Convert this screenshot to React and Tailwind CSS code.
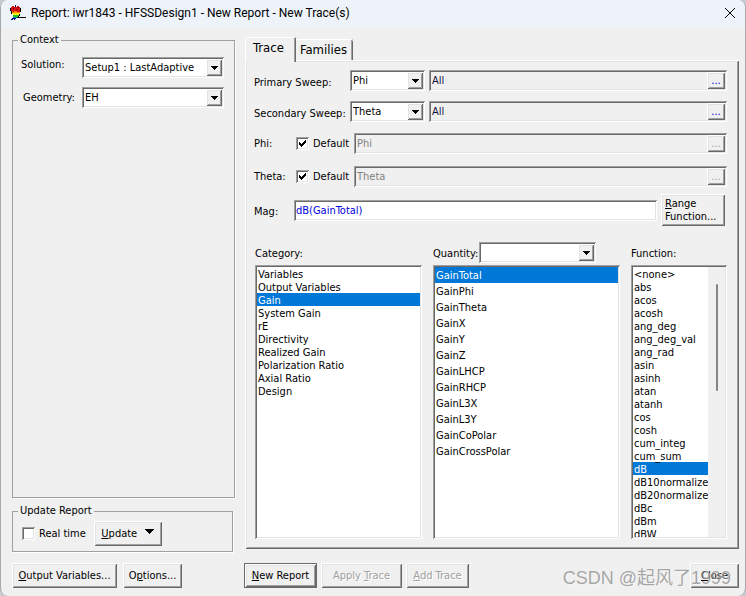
import React, { useState } from "react";
import clsx from "clsx";

const RAISED =
  "bg-[#f0f0f0] shadow-[inset_1px_1px_#ffffff,inset_-1px_-1px_#696969,inset_2px_2px_#e3e3e3,inset_-2px_-2px_#a0a0a0]";
const SUNKEN =
  "shadow-[inset_1px_1px_#a0a0a0,inset_-1px_-1px_#ffffff,inset_2px_2px_#696969,inset_-2px_-2px_#e3e3e3]";

const categories = [
  "Variables",
  "Output Variables",
  "Gain",
  "System Gain",
  "rE",
  "Directivity",
  "Realized Gain",
  "Polarization Ratio",
  "Axial Ratio",
  "Design",
];

const quantities = [
  "GainTotal",
  "GainPhi",
  "GainTheta",
  "GainX",
  "GainY",
  "GainZ",
  "GainLHCP",
  "GainRHCP",
  "GainL3X",
  "GainL3Y",
  "GainCoPolar",
  "GainCrossPolar",
];

const functions = [
  "<none>",
  "abs",
  "acos",
  "acosh",
  "ang_deg",
  "ang_deg_val",
  "ang_rad",
  "asin",
  "asinh",
  "atan",
  "atanh",
  "cos",
  "cosh",
  "cum_integ",
  "cum_sum",
  "dB",
  "dB10normalize",
  "dB20normalize",
  "dBc",
  "dBm",
  "dBW",
];

const AppIcon = () => (
  <svg viewBox="0 0 17 17" className="h-[17px] w-[17px]" shapeRendering="crispEdges" aria-hidden="true">
    <path d="M5 0h1v2h-1z" fill="#101060" />
    <path d="M2 1h2v1h-2zM7 1h2v1h-2zM1 2h9v4h-9zM2 6h8v1h-8z" fill="#d01010" />
    <path d="M3 3h1v1h-1zM6 4h1v1h-1zM8 2h1v1h-1z" fill="#700000" />
    <path d="M2 6h1v1h-1zM4 6h3v1h-3zM2 7h8v1h-8z" fill="#ff8000" />
    <path d="M2 8h8v1h-8zM3 9h6v1h-6z" fill="#ffee00" />
    <path d="M3 10h6v1h-6zM3 11h5v1h-5z" fill="#20c020" />
    <path d="M3 12h4v1h-4z" fill="#0090a0" />
    <path d="M2 13h4v1h-4zM1 14h2v1h-2zM4 14h1v1h-1z" fill="#000090" />
    <path d="M0 3h1v3h-1zM1 6h1v3h-1zM10 3h1v4h-1zM9 9h1v2h-1zM8 11h1v1h-1zM7 12h9v1h-9z" fill="#000000" />
  </svg>
);

const DropDown = ({ label, options, className }) => (
  <div className={clsx("relative h-[21px] bg-white p-0.5", SUNKEN, className)}>
    <select
      aria-label={label}
      className="block h-full w-full appearance-none bg-transparent pl-px pr-4 pt-px outline-none"
    >
      {options.map((option) => (
        <option key={option}>{option}</option>
      ))}
    </select>
    <span
      className={clsx(
        "pointer-events-none absolute inset-y-0.5 right-0.5 flex w-4 items-center justify-center",
        RAISED
      )}
    >
      <svg viewBox="0 0 7 4" className="h-1 w-[7px]" shapeRendering="crispEdges" aria-hidden="true">
        <path d="M0 0h7v1h-7zM1 1h5v1h-5zM2 2h3v1h-3zM3 3h1v1h-1z" />
      </svg>
    </span>
  </div>
);

const SweepField = ({ label, value, disabled }) => (
  <div className={clsx("flex h-[21px] min-w-0 flex-1 p-0.5", SUNKEN)}>
    <input
      aria-label={label}
      defaultValue={value}
      disabled={disabled}
      className={clsx(
        "min-w-0 flex-1 bg-transparent pl-px outline-none",
        disabled ? "text-[#808080]" : "text-[#101040]"
      )}
    />
    <button
      type="button"
      aria-label={`Edit ${label}`}
      disabled={disabled}
      className={clsx(
        "flex w-[18px] items-center justify-center",
        RAISED,
        disabled ? "text-[#a0a0a0]" : "text-[#0000e0]"
      )}
    >
      ...
    </button>
  </div>
);

const Tick = ({ label, checked, onChange }) => (
  <label className="flex items-center gap-1">
    <span className="relative flex">
      <input
        type="checkbox"
        checked={checked}
        onChange={(e) => onChange(e.target.checked)}
        className={clsx("h-[13px] w-[13px] appearance-none bg-white", SUNKEN)}
      />
      {checked && (
        <svg
          viewBox="0 0 13 13"
          className="pointer-events-none absolute inset-0"
          shapeRendering="crispEdges"
          aria-hidden="true"
        >
          <path d="M3 5h1v3h-1zM4 6h1v3h-1zM5 7h1v3h-1zM6 6h1v3h-1zM7 5h1v3h-1zM8 4h1v3h-1zM9 3h1v3h-1z" />
        </svg>
      )}
    </span>
    {label}
  </label>
);

const ListBox = ({ label, options, value, onChange, rowClass, children }) => (
  <div className={clsx("flex min-h-[274px] flex-1 bg-white p-0.5", SUNKEN)}>
    <select
      size={12}
      aria-label={label}
      value={value}
      onChange={(e) => onChange(e.target.value)}
      className="min-w-0 flex-1 overflow-hidden outline-none [scrollbar-width:none]"
    >
      {options.map((option) => (
        <option
          key={option}
          value={option}
          className={clsx(
            "min-h-0 p-0 pl-px checked:bg-linear-to-r checked:from-[#0078d7] checked:to-[#0078d7] checked:[-webkit-text-fill-color:#ffffff]",
            rowClass
          )}
        >
          {option}
        </option>
      ))}
    </select>
    {children}
  </div>
);

const PushButton = ({ children, className, disabled }) => (
  <button
    type="button"
    disabled={disabled}
    className={clsx(
      "flex h-[25px] items-center justify-center whitespace-nowrap",
      RAISED,
      disabled && "text-[#a0a0a0] [text-shadow:1px_1px_#ffffff]",
      className
    )}
  >
    <span>{children}</span>
  </button>
);

const GroupBox = ({ title, className, children }) => (
  <fieldset
    className={clsx("min-w-0 border border-[#a0a0a0] shadow-[1px_1px_#ffffff]", className)}
  >
    <legend className="ml-[5px] px-0.5 leading-[14px]">{title}</legend>
    {children}
  </fieldset>
);

const TracePanel = () => {
  const [category, setCategory] = useState("Gain");
  const [quantity, setQuantity] = useState("GainTotal");
  const [func, setFunc] = useState("dB");
  const [defaults, setDefaults] = useState({ Phi: true, Theta: true });

  return (
    <div className={clsx("flex flex-1 flex-col pb-2.5 pl-[9px] pr-3 pt-2.5", RAISED)}>
      <div className="flex flex-col gap-2.5">
        <div className="flex items-center">
          <span className="w-24 pt-1">Primary Sweep:</span>
          <DropDown label="Primary Sweep" options={["Phi", "Theta", "Freq"]} className="mr-1 w-[75px]" />
          <SweepField label="Primary Sweep values" value="All" />
        </div>
        <div className="flex items-center">
          <span className="w-24 whitespace-nowrap pt-1">Secondary Sweep:</span>
          <DropDown label="Secondary Sweep" options={["Theta", "Phi", "Freq"]} className="mr-1 w-[75px]" />
          <SweepField label="Secondary Sweep values" value="All" />
        </div>
      </div>

      <div className="mt-[11px] flex flex-col gap-3">
        {["Phi", "Theta"].map((name) => (
          <div key={name} className="flex items-center">
            <span className="w-[42px]">{name}:</span>
            <div className="w-[58px]">
              <Tick
                label="Default"
                checked={defaults[name]}
                onChange={(checked) => setDefaults((prev) => ({ ...prev, [name]: checked }))}
              />
            </div>
            <SweepField label={`${name} values`} value={name} disabled={defaults[name]} />
          </div>
        ))}
      </div>

      <div className="mt-[7px] flex items-center">
        <label htmlFor="mag" className="w-10 pt-1">
          Mag:
        </label>
        <input
          id="mag"
          defaultValue="dB(GainTotal)"
          className={clsx("h-[21px] min-w-0 flex-1 bg-white px-0.5 text-[#0000e0] outline-none", SUNKEN)}
        />
        <button
          type="button"
          className={clsx("ml-1 mr-0.5 h-8 w-16 pl-1 text-left leading-[13px]", RAISED)}
        >
          <u>R</u>ange
          <br />
          Function...
        </button>
      </div>

      <div className="mt-4 flex flex-1 gap-[11px] pl-px">
        <div className="flex min-w-0 flex-[167] flex-col gap-0.5">
          <span className="flex h-[21px] items-center pt-0.5">Category:</span>
          <ListBox
            label="Category"
            options={categories}
            value={category}
            onChange={setCategory}
            rowClass="h-[13px] pt-px leading-[12px]"
          />
        </div>
        <div className="flex min-w-0 flex-[187] flex-col gap-0.5">
          <div className="flex h-[21px] items-center">
            <span className="w-[46px] pt-0.5">Quantity:</span>
            <DropDown label="Quantity filter" options={[""]} className="w-[117px]" />
          </div>
          <ListBox
            label="Quantity"
            options={quantities}
            value={quantity}
            onChange={setQuantity}
            rowClass="h-4 pt-0.5 leading-[14px]"
          />
        </div>
        <div className="flex w-24 flex-col gap-0.5">
          <span className="flex h-[21px] items-center pt-0.5">Function:</span>
          <ListBox
            label="Function"
            options={functions}
            value={func}
            onChange={setFunc}
            rowClass="h-[13px] pt-px leading-[12px]"
          >
            <div className="flex w-[17px] justify-center bg-[#f0f0f0] pt-[17px]">
              <div className="h-[107px] w-0.5 rounded bg-[#868686]" />
            </div>
          </ListBox>
        </div>
      </div>
    </div>
  );
};

export default function App() {
  const [realTime, setRealTime] = useState(false);

  return (
    <div className="bg-[#c8ccd2] font-['DejaVu_Sans_Condensed','Noto_Sans',sans-serif] text-[11px] leading-[14px] text-black">
      <div className="relative flex min-h-screen flex-col overflow-hidden rounded-lg border-x border-[#a8a8a8] bg-[#f0f0f0]">
        <header className="flex h-7 items-center bg-[#eef3fa] pb-0.5 pl-[9px] pr-2.5 font-[Roboto,sans-serif] text-xs">
          <AppIcon />
          <h1 className="ml-1 flex-1">Report: iwr1843 - HFSSDesign1 - New Report - New Trace(s)</h1>
          <button type="button" aria-label="Close window">
            <svg viewBox="0 0 10 10" className="h-2.5 w-2.5" fill="none" stroke="#000000" aria-hidden="true">
              <path d="M0 0l10 10M10 0l-10 10" />
            </svg>
          </button>
        </header>

        <main className="flex flex-1 gap-2.5 pl-[11px] pr-1.5 pt-[5px]">
          <div className="flex w-[223px] shrink-0 flex-col gap-1.5">
            <GroupBox title="Context" className="flex-1">
              <div className="mt-2.5 flex items-center pl-2 pr-2.5">
                <span className="w-[61px] pb-1.5">Solution:</span>
                <DropDown label="Solution" options={["Setup1 : LastAdaptive"]} className="flex-1" />
              </div>
              <div className="mt-[9px] flex items-center pl-2 pr-2.5">
                <span className="w-[61px] pl-0.5">Geometry:</span>
                <DropDown label="Geometry" options={["EH"]} className="flex-1" />
              </div>
            </GroupBox>
            <GroupBox title="Update Report" className="mr-0.5 pb-[5px]">
              <div className="mt-[3px] flex items-center gap-2 pl-[9px]">
                <Tick label="Real time" checked={realTime} onChange={setRealTime} />
                <PushButton className="w-[68px]">
                  <span className="flex items-center gap-2">
                    <span>
                      <u>U</u>pdate
                    </span>
                    <svg viewBox="0 0 9 5" className="mb-1 h-[5px] w-[9px]" shapeRendering="crispEdges" aria-hidden="true">
                      <path d="M0 0h9v1h-9zM1 1h7v1h-7zM2 2h5v1h-5zM3 3h3v1h-3zM4 4h1v1h-1z" />
                    </svg>
                  </span>
                </PushButton>
              </div>
            </GroupBox>
          </div>

          <div className="mb-[3px] flex min-w-0 flex-1 flex-col pt-1">
            <div role="tablist" className="flex items-end text-[13px]">
              <button
                type="button"
                role="tab"
                aria-selected="true"
                className="relative -mb-0.5 h-[25px] w-[51px] rounded-t-xs bg-[#f0f0f0] pb-1 pr-1 shadow-[inset_1px_1px_#ffffff,inset_-1px_0_#696969,inset_-2px_0_#a0a0a0]"
              >
                Trace
              </button>
              <button
                type="button"
                role="tab"
                aria-selected="false"
                className="h-[21px] w-[57px] rounded-t-xs bg-[#f0f0f0] pr-0.5 shadow-[inset_0_1px_#ffffff,inset_-1px_0_#696969,inset_-2px_0_#a0a0a0]"
              >
                Families
              </button>
            </div>
            <TracePanel />
          </div>
        </main>

        <footer className="flex items-center pb-2 pl-[11px] pr-1.5 pt-[11px]">
          <div className="mr-[9px] flex w-[223px] shrink-0 gap-1.5">
            <PushButton className="w-[105px]">
              <u>O</u>utput Variables...
            </PushButton>
            <PushButton className="w-[59px]">
              O<u>p</u>tions...
            </PushButton>
          </div>
          <div className="flex flex-1 gap-1">
            <PushButton className="w-[73px] border border-[#696969]">
              <u>N</u>ew Report
            </PushButton>
            <PushButton className="w-[81px]" disabled>
              Apply <u>T</u>race
            </PushButton>
            <PushButton className="w-[63px]" disabled>
              <u>A</u>dd Trace
            </PushButton>
          </div>
          <PushButton className="w-[49px]">
            <u>C</u>lose
          </PushButton>
        </footer>

        <div className="pointer-events-none absolute bottom-1 right-3.5 whitespace-nowrap font-['Liberation_Sans','Noto_Sans_CJK_SC',sans-serif] text-lg text-[#8c8c8c]/75 [text-shadow:1px_1px_rgb(255_255_255/0.4)]">
          CSDN @起风了1999
        </div>
      </div>
    </div>
  );
}
